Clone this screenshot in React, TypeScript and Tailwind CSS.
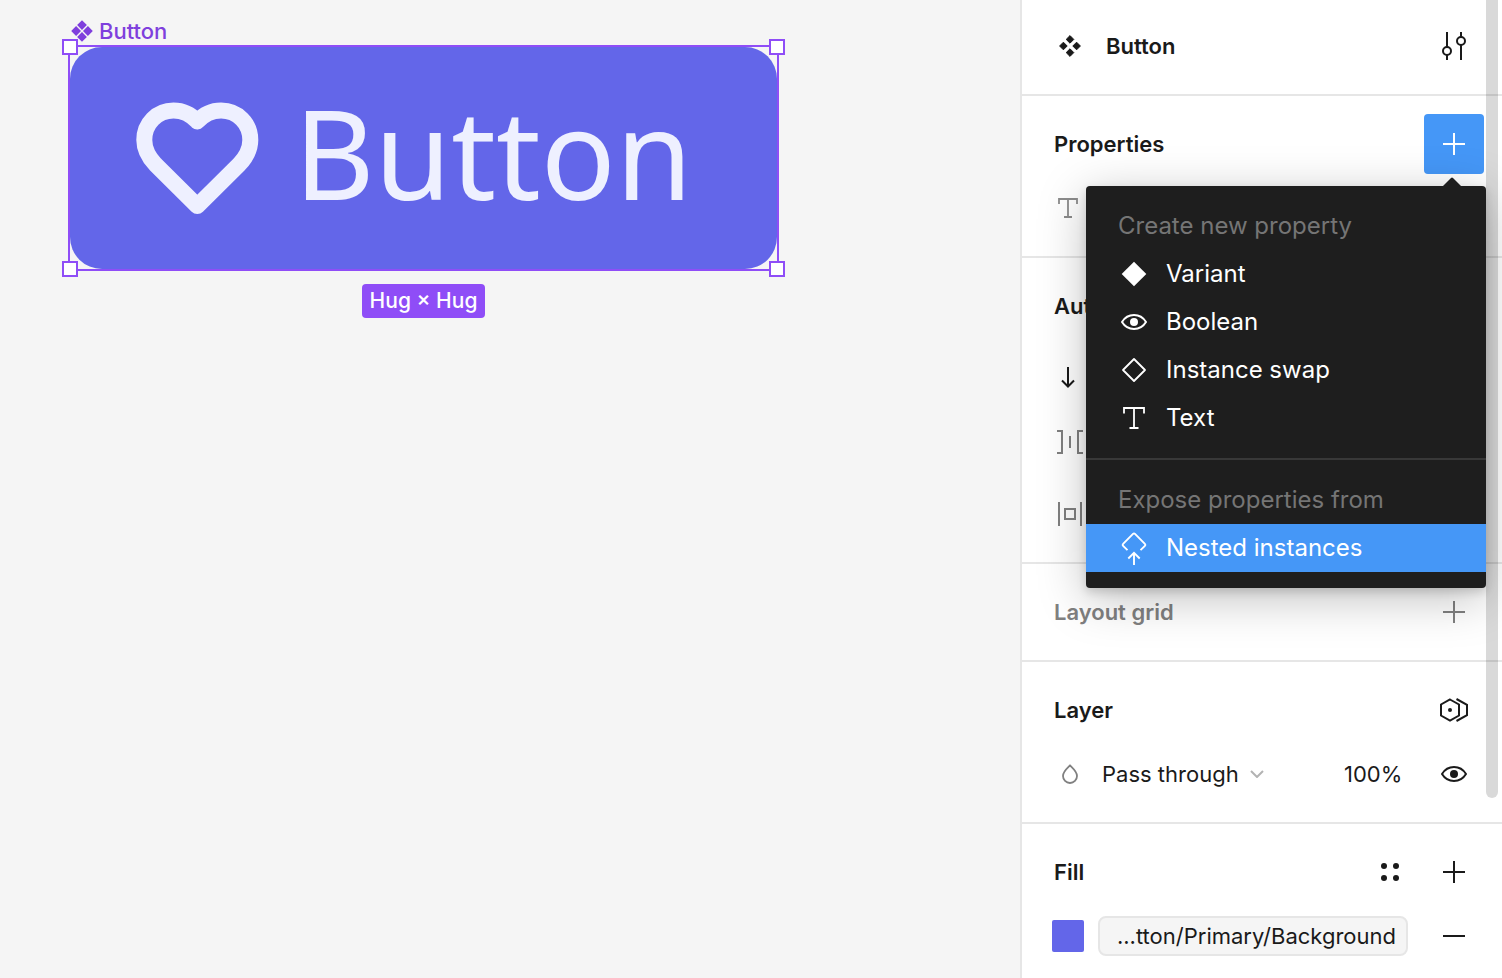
import type { ReactNode } from 'react';

function Icon({ children, className = '' }: { children: ReactNode; className?: string }) {
  return (
    <svg
      viewBox="0 0 32 32"
      fill="none"
      stroke="currentColor"
      strokeWidth="2"
      aria-hidden="true"
      className={`h-8 w-8 shrink-0 ${className}`}
    >
      {children}
    </svg>
  );
}

const ComponentIcon = ({ className }: { className?: string }) => (
  <Icon className={className}>
    <path
      fill="currentColor"
      strokeWidth="1"
      strokeLinejoin="round"
      d="M16 5.600l3.800 3.800-3.800 3.800-3.800-3.800zM16 18.800l3.800 3.800-3.800 3.800-3.800-3.800zM9.400 12.200l3.800 3.800-3.800 3.800L5.600 16zM22.600 12.200l3.800 3.800-3.800 3.800L18.800 16z"
    />
  </Icon>
);

const CanvasComponentIcon = ({ className }: { className?: string }) => (
  <Icon className={className}>
    <path
      fill="currentColor"
      stroke="none"
      d="M16 5.200l4.900 4.900-4.900 4.900-4.900-4.900zM16 17l4.900 4.900-4.900 4.900-4.900-4.900zM10.100 11.100L15 16l-4.900 4.900L5.200 16zM21.900 11.100l4.900 4.900-4.900 4.900L17 16z"
    />
  </Icon>
);

const PlusIcon = () => (
  <Icon>
    <path d="M16 5v22M5 16h22" />
  </Icon>
);

const EyeIcon = () => (
  <Icon>
    <path d="M4 16C6.800 11.400 11 9 16 9s9.200 2.400 12 7c-2.800 4.600-7 7-12 7S6.800 20.600 4 16z" strokeLinejoin="round" />
    <circle cx="16" cy="16" r="4" fill="currentColor" stroke="none" />
  </Icon>
);

const TextIcon = ({ className }: { className?: string }) => (
  <Icon className={className}>
    <path d="M6 11.500V6h20v5.500M16 6v20M11.500 26h9" strokeWidth="1.800" />
  </Icon>
);

function IconButton({ label, children, className = '' }: { label: string; children: ReactNode; className?: string }) {
  return (
    <button
      type="button"
      aria-label={label}
      className={`flex h-15 w-15 shrink-0 items-center justify-center rounded-sm ${className}`}
    >
      {children}
    </button>
  );
}

function Row({ children }: { children: ReactNode }) {
  return <div className="flex h-16 items-center">{children}</div>;
}

function Title({ children, muted = false }: { children: ReactNode; muted?: boolean }) {
  return (
    <h2 className={`grow text-[22px] leading-8 font-semibold ${muted ? 'text-[#808080]' : 'text-[#1a1a1a]'}`}>
      {children}
    </h2>
  );
}

const section = 'border-b-2 border-[#e6e6e6] py-4 pr-[18px] pl-8';

function MenuItem({ icon, children, active = false }: { icon: ReactNode; children: ReactNode; active?: boolean }) {
  return (
    <button
      type="button"
      role="menuitem"
      className={`flex h-12 w-full items-center gap-4 px-8 text-left ${active ? 'bg-[#4597f7]' : ''}`}
    >
      {icon}
      {children}
    </button>
  );
}

function PropertyMenu() {
  return (
    <div
      role="menu"
      className="absolute top-[72px] -right-0.5 z-10 w-[400px] rounded-sm bg-[#1e1e1e] text-2xl text-white shadow-[0_4px_10px_rgba(0,0,0,0.15),0_10px_48px_rgba(0,0,0,0.25)]"
    >
      <svg viewBox="0 0 20 10" aria-hidden="true" className="absolute -top-[9px] right-6 h-2.5 w-5 fill-[#1e1e1e]">
        <path d="M0 10 9 1q1-1 2 0l9 9z" />
      </svg>
      <div className="border-b-2 border-[#383838] py-4">
        <p className="flex h-12 items-center px-8 text-[#757575]">Create new property</p>
        <MenuItem
          icon={
            <Icon>
              <path d="M16 3.700 28.300 16 16 28.300 3.700 16z" fill="currentColor" stroke="none" />
            </Icon>
          }
        >
          Variant
        </MenuItem>
        <MenuItem icon={<EyeIcon />}>Boolean</MenuItem>
        <MenuItem
          icon={
            <Icon>
              <path d="M16 5 27 16 16 27 5 16z" strokeWidth="1.800" strokeLinejoin="round" />
            </Icon>
          }
        >
          Instance swap
        </MenuItem>
        <MenuItem icon={<TextIcon />}>Text</MenuItem>
      </div>
      <div className="py-4">
        <p className="flex h-12 items-center px-8 text-[#757575]">Expose properties from</p>
        <MenuItem
          active
          icon={
            <Icon className="overflow-visible">
              <path
                d="M9.500 18.200 5.100 13.800q-1-1 0-2l9.900-9.900q1-1 2 0l9.900 9.900q1 1 0 2l-4.400 4.400M16 33V21M10.300 26.500l5.700-5.700 5.700 5.700"
                strokeWidth="1.900"
              />
            </Icon>
          }
        >
          Nested instances
        </MenuItem>
      </div>
    </div>
  );
}

const handle = 'absolute h-4 w-4 border-2 border-[#8f4df7] bg-white';

function Canvas() {
  return (
    <main className="min-w-0 grow bg-[#f5f5f5] pt-4 pl-[68px]">
      <div className="flex h-[29px] w-fit items-center pt-px text-[22px] font-medium text-[#7f3fdd]">
        <CanvasComponentIcon className="mr-px -ml-0.5" />
        Button
      </div>
      <div className="flex w-fit flex-col items-center gap-[13px]">
        <div className="relative border-2 border-[#8f4df7]">
          <button
            type="button"
            className="flex h-[222px] w-[707px] items-center rounded-[32px] bg-[#6366e9] pl-16 text-left"
          >
            <svg
              viewBox="0 0 128 128"
              fill="none"
              stroke="#eef0ff"
              strokeWidth="16"
              strokeLinecap="round"
              strokeLinejoin="round"
              aria-hidden="true"
              className="h-32 w-32 shrink-0"
            >
              <path d="M63.300 27.500C56.500 20 48.500 16.500 39.500 16.500 23 16.500 10.300 29.500 10.300 46c0 10 5 18 11.200 24.500L63.300 112l41.800-41.500c6.200-6.500 11.200-14.500 11.200-24.500C116.300 29.500 103.600 16.500 87.100 16.500c-9 0-17 3.500-23.800 11z" />
            </svg>
            <span className="ml-8 pb-3 font-['Noto_Sans',sans-serif] text-[124px] leading-none text-[#eef0ff]">
              Button
            </span>
          </button>
          <span className={`${handle} -top-2 -left-2`} />
          <span className={`${handle} -top-2 -right-2`} />
          <span className={`${handle} -bottom-2 -left-2`} />
          <span className={`${handle} -right-2 -bottom-2`} />
        </div>
        <div className="flex h-[34px] items-center rounded-sm bg-[#8f4df7] px-2 text-[21px] font-medium text-white">
          Hug × Hug
        </div>
      </div>
    </main>
  );
}

function Inspector() {
  return (
    <aside className="relative w-[482px] shrink-0 border-l-2 border-[#e6e6e6] bg-white">
      <section className="border-b-2 border-[#e6e6e6] pt-3.5 pr-[18px] pb-4 pl-8">
        <Row>
          <ComponentIcon className="mr-5" />
          <Title>Button</Title>
          <IconButton label="Component settings">
            <Icon>
              <path d="M9 2v15M9 25v5M23 2v5M23 15v15" />
              <circle cx="9" cy="21" r="4" />
              <circle cx="23" cy="11" r="4" />
            </Icon>
          </IconButton>
        </Row>
      </section>

      <section className={section}>
        <Row>
          <Title>Properties</Title>
          <div className="relative">
            <IconButton label="Create property" className="bg-[#4597f7] text-white">
              <PlusIcon />
            </IconButton>
            <PropertyMenu />
          </div>
        </Row>
        <Row>
          <Icon className="-ml-0.5 text-[#8c8c8c]">
            <path d="M7 12V7h18v5M16 7v18M12 25h8" strokeWidth="1.800" />
          </Icon>
        </Row>
      </section>

      <section className="border-b-2 border-[#e6e6e6] pt-4 pr-[18px] pl-8">
        <Row>
          <Title>Auto layout</Title>
        </Row>
        <div className="flex h-20 items-center">
          <Icon className="-ml-0.5">
            <path d="M16 5v19.500M10 18.500l6 6 6-6" />
          </Icon>
        </div>
        <div className="flex h-12 items-center text-[#808080]">
          <Icon>
            <path d="M3 5h5v22H3M16 10v12M29 5h-5v22h5" />
          </Icon>
        </div>
        <div className="flex h-24 items-center text-[#808080]">
          <Icon>
            <path d="M5 4v24M27 4v24M11 11h10v10H11z" />
          </Icon>
        </div>
      </section>

      <section className={section}>
        <Row>
          <Title muted>Layout grid</Title>
          <IconButton label="Add layout grid" className="text-[#808080]">
            <PlusIcon />
          </IconButton>
        </Row>
      </section>

      <section className={section}>
        <Row>
          <Title>Layer</Title>
          <IconButton label="Layer variables">
            <Icon>
              <path d="M12 5.500 21 10.500v11L12 26.500 3 21.500v-11zM18.500 5 29 10.800v10.400L18.500 27" />
              <circle cx="12" cy="16" r="2" fill="currentColor" stroke="none" />
            </Icon>
          </IconButton>
        </Row>
        <Row>
          <Icon className="text-[#808080]">
            <path d="M16 7.500c3 3 7 6.200 7 10.500a7 7 0 0 1-14 0c0-4.300 4-7.500 7-10.500z" strokeWidth="1.800" />
          </Icon>
          <div className="relative ml-4 w-[164px]">
            <select aria-label="Blend mode" className="w-full appearance-none bg-transparent text-[22px] leading-8">
              <option>Pass through</option>
            </select>
            <svg
              viewBox="0 0 14 8"
              fill="none"
              stroke="#b3b3b3"
              strokeWidth="2"
              aria-hidden="true"
              className="pointer-events-none absolute top-3 right-0.5 h-2 w-3.5"
            >
              <path d="M1 1l6 6 6-6" />
            </svg>
          </div>
          <input
            aria-label="Layer opacity"
            defaultValue="100%"
            className="ml-auto w-20 bg-transparent text-[22px] leading-8"
          />
          <IconButton label="Toggle layer visibility">
            <EyeIcon />
          </IconButton>
        </Row>
      </section>

      <section className="pt-4 pr-[18px] pl-8">
        <Row>
          <Title>Fill</Title>
          <IconButton label="Fill styles" className="mr-1">
            <Icon>
              <g fill="currentColor" stroke="none">
                <circle cx="10" cy="10" r="3" />
                <circle cx="22" cy="10" r="3" />
                <circle cx="10" cy="22" r="3" />
                <circle cx="22" cy="22" r="3" />
              </g>
            </Icon>
          </IconButton>
          <IconButton label="Add fill">
            <PlusIcon />
          </IconButton>
        </Row>
        <Row>
          <button type="button" aria-label="Fill color" className="-ml-0.5 h-8 w-8 shrink-0 rounded-xs bg-[#6366e9]" />
          <button
            type="button"
            className="mr-4 ml-3.5 flex h-10 grow items-center justify-end rounded-lg border-2 border-[#e6e6e6] bg-[#f5f5f5] pr-2.5 text-[22px] whitespace-nowrap"
          >
            ...tton/Primary/Background
          </button>
          <IconButton label="Remove fill">
            <Icon>
              <path d="M5 16h22" />
            </Icon>
          </IconButton>
        </Row>
      </section>

      <div className="absolute top-0 right-1 h-[798px] w-3 rounded-b-full bg-black/15" />
    </aside>
  );
}

export default function App() {
  return (
    <div className="flex h-screen overflow-hidden font-[Inter,sans-serif] text-[#1a1a1a]">
      <Canvas />
      <Inspector />
    </div>
  );
}
